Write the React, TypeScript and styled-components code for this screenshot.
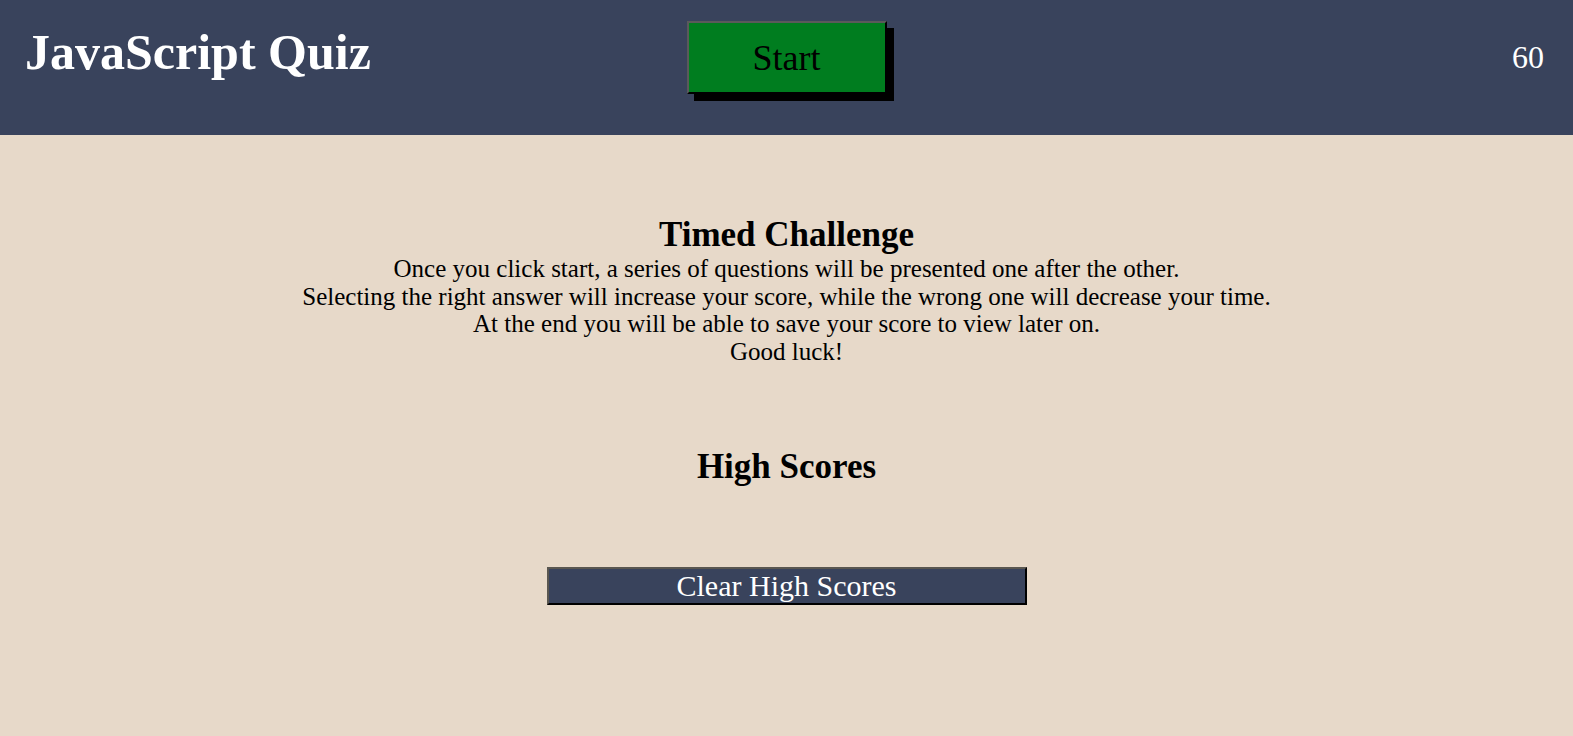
import React from "react";
import styled, { createGlobalStyle } from "styled-components";

const GlobalStyle = createGlobalStyle`
  html, body {
    margin: 0;
    padding: 0;
    background: #e7d9c9;
    font-family: "Liberation Serif", "Times New Roman", serif;
  }
  * { box-sizing: border-box; }
`;

const Header = styled.header`
  height: 135px;
  background: #39435c;
  display: grid;
  grid-template-columns: 1fr auto 1fr;
  align-items: start;
  padding: 0 25px;
`;

const Title = styled.h1`
  margin: 23px 0 0;
  font-size: 50px;
  font-weight: bold;
  line-height: normal;
  color: #ffffff;
  justify-self: start;
`;

const StartButton = styled.button`
  margin-top: 21px;
  width: 200px;
  height: 73px;
  background: #007d1f;
  color: #000000;
  font-family: "Liberation Serif", "Times New Roman", serif;
  font-size: 36px;
  border-width: 2px;
  border-style: solid;
  border-color: #5a5a5a #000000 #000000 #5a5a5a;
  box-shadow: 7px 7px 0 #000000;
  padding: 0;
  cursor: pointer;
`;

const Timer = styled.div`
  margin: 39px 4px 0 0;
  justify-self: end;
  font-size: 32px;
  line-height: normal;
  color: #ffffff;
`;

const Main = styled.main`
  display: flex;
  flex-direction: column;
  align-items: center;
  padding-top: 80px;
  text-align: center;
`;

const SectionTitle = styled.h2<{ $top?: number }>`
  margin: ${(p) => p.$top ?? 0}px 0 0;
  font-size: 35px;
  font-weight: bold;
  line-height: normal;
  color: #000000;
`;

const Intro = styled.p`
  margin: 0;
  font-size: 25px;
  line-height: 27.6px;
  color: #000000;
`;

const ClearButton = styled.button`
  margin-top: 80px;
  width: 480px;
  height: 38px;
  background: #39435c;
  color: #ffffff;
  font-family: "Liberation Serif", "Times New Roman", serif;
  font-size: 30px;
  line-height: 1;
  border-width: 2px;
  border-style: solid;
  border-color: #5a5750 #000000 #000000 #5a5750;
  padding: 0;
  cursor: pointer;
`;

export default function App() {
  return (
    <>
      <GlobalStyle />
      <Header>
        <Title>JavaScript Quiz</Title>
        <StartButton>Start</StartButton>
        <Timer>60</Timer>
      </Header>
      <Main>
        <SectionTitle>Timed Challenge</SectionTitle>
        <Intro>
          Once you click start, a series of questions will be presented one after the other.
          <br />
          Selecting the right answer will increase your score, while the wrong one will decrease your time.
          <br />
          At the end you will be able to save your score to view later on.
          <br />
          Good luck!
        </Intro>
        <SectionTitle $top={82}>High Scores</SectionTitle>
        <ClearButton>Clear High Scores</ClearButton>
      </Main>
    </>
  );
}
